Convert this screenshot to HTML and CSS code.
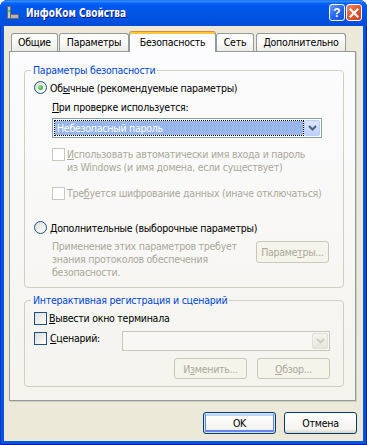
FILE: index.html
```html
<!DOCTYPE html>
<html lang="ru">
<head>
    <meta charset="UTF-8">
    <title>ИнфоКом Свойства</title>
    <link rel="stylesheet" href="styles.css">
</head>
<body>
    <div class="window">
        <div class="titlebar">
            <svg class="app-icon" width="16" height="16" viewBox="0 0 16 16">
                <rect x="2.5" y="1.5" width="3" height="12" fill="#c8c8c8" stroke="#6a6a6a"/>
                <rect x="5.5" y="9.5" width="8" height="4" fill="#b4b4b4" stroke="#6a6a6a"/>
                <rect x="3" y="5" width="2" height="2" fill="#3fd24a"/>
            </svg>
            <span class="title">ИнфоКом Свойства</span>
            <div class="caption-buttons">
                <span class="cap-btn cap-help">?</span>
                <span class="cap-btn cap-close">
                    <svg width="10" height="10" viewBox="0 0 10 10">
                        <path d="M1.5 1.5 L8.5 8.5 M8.5 1.5 L1.5 8.5" stroke="#fff" stroke-width="2.2" stroke-linecap="square"/>
                    </svg>
                </span>
            </div>
        </div>

        <div class="client">
            <div class="tabs">
                <div class="tab tab-general">Общие</div>
                <div class="tab tab-params">Параметры</div>
                <div class="tab tab-security selected">Безопасность</div>
                <div class="tab tab-net">Сеть</div>
                <div class="tab tab-extra">Дополнительно</div>
            </div>

            <div class="panel">
                <fieldset class="group">
                    <legend>Параметры безопасности</legend>
                    <div class="option first">
                        <span class="radio checked"></span>
                        <span>Об<u>ы</u>чные (рекомендуемые параметры)</span>
                    </div>
                    <div class="indent label-line"><u>П</u>ри проверке используется:</div>
                    <div class="combo combo-auth indent">
                        <span class="combo-value">Небезопасный пароль</span>
                        <span class="combo-btn">
                            <svg width="9" height="6" viewBox="0 0 9 6"><path d="M1 1 L4.5 4.5 L8 1" fill="none" stroke="#4d6185" stroke-width="2"/></svg>
                        </span>
                    </div>
                    <div class="check-row indent disabled auto-login">
                        <span class="check"></span>
                        <span><u>И</u>спользовать автоматически имя входа и пароль<br>из Windows (и имя домена, если существует)</span>
                    </div>
                    <div class="check-row indent disabled encrypt">
                        <span class="check"></span>
                        <span>Тре<u>б</u>уется шифрование данных (иначе отключаться)</span>
                    </div>
                    <div class="option custom">
                        <span class="radio"></span>
                        <span><u>Д</u>ополнительные (выборочные параметры)</span>
                    </div>
                    <div class="custom-row indent">
                        <div class="hint">Применение этих параметров требует<br>знания протоколов обеспечения<br>безопасности.</div>
                        <span class="btn disabled">Параме<u>т</u>ры...</span>
                    </div>
                </fieldset>

                <fieldset class="group group-script">
                    <legend>Интерактивная регистрация и сценарий</legend>
                    <div class="check-row terminal">
                        <span class="check enabled"></span>
                        <span><u>В</u>ывести окно терминала</span>
                    </div>
                    <div class="script-row">
                        <span class="check enabled"></span>
                        <span class="script-label"><u>С</u>ценарий:</span>
                        <div class="combo combo-script">
                            <span class="combo-value"></span>
                            <span class="combo-btn">
                                <svg width="9" height="6" viewBox="0 0 9 6"><path d="M1 1 L4.5 4.5 L8 1" fill="none" stroke="#cfcdc2" stroke-width="2"/></svg>
                            </span>
                        </div>
                    </div>
                    <div class="button-row">
                        <span class="btn disabled">И<u>з</u>менить...</span>
                        <span class="btn disabled"><u>О</u>бзор...</span>
                    </div>
                </fieldset>
            </div>

            <div class="dialog-buttons">
                <span class="btn default">OK</span>
                <span class="btn">Отмена</span>
            </div>
        </div>
    </div>
</body>
</html>
```

FILE: styles.css
```css
* {
    box-sizing: border-box;
}
body {
    margin: 0;
    background: #fff;
    font-family: "DejaVu Sans Condensed", "Liberation Sans", sans-serif;
    font-size: 10.5px;
    letter-spacing: -0.25px;
    color: #000;
}
u {
    text-decoration: underline;
    text-underline-offset: 1px;
}
.window {
    width: 367px;
    height: 445px;
    display: flex;
    flex-direction: column;
    background: #0855dd;
    border-radius: 8px 8px 0 0;
    overflow: hidden;
    box-shadow: inset 1px 0 #0831d9, inset -1px 0 #001ea0, inset 0 -1px #001ea0;
}
.titlebar {
    height: 26px;
    display: flex;
    align-items: center;
    padding: 0 5px 0 5px;
    background: linear-gradient(#0a5fe8 0, #3d95ff 1px, #0a66f7 3px, #0058ee 6px, #0055e5 50%, #0050dd 85%, #004bd6 100%);
}
.app-icon {
    flex: none;
    margin-top: -1px;
}
.title {
    margin-left: 5px;
    color: #fff;
    font-family: "DejaVu Sans Condensed", sans-serif;
    font-weight: bold;
    font-size: 13px;
    letter-spacing: 0;
    text-shadow: 1px 1px #0f1089;
    flex: 1;
    margin-top: -1px;
    white-space: nowrap;
    transform: scaleX(0.77);
    transform-origin: left center;
}
.caption-buttons {
    display: flex;
    gap: 1px;
    align-self: flex-start;
    margin-top: 4px;
}
.cap-btn {
    width: 16px;
    height: 17px;
    border: 1px solid #fff;
    border-radius: 3px;
    display: flex;
    align-items: center;
    justify-content: center;
    color: #fff;
}
.cap-help {
    background: linear-gradient(135deg, #6c9bff, #2463ea 55%, #1a52dc);
    font-family: "Liberation Sans", Arial, sans-serif;
    font-weight: bold;
    font-size: 12px;
    letter-spacing: 0;
}
.cap-close {
    background: linear-gradient(135deg, #f08a6c, #e2552e 50%, #c8401c);
}
.client {
    flex: 1;
    margin: 0 4px 4px;
    background: #ece9d8;
    display: flex;
    flex-direction: column;
}
.tabs {
    display: flex;
    align-items: flex-end;
    height: 21px;
    margin-top: 5px;
    padding-left: 7px;
}
.tab {
    height: 18px;
    margin-bottom: 1px;
    border: 1px solid #919b9c;
    border-bottom: none;
    border-radius: 3px 3px 0 0;
    background: linear-gradient(#fff, #fafaf8 50%, #ecebe6);
    text-align: center;
    line-height: 17px;
    white-space: nowrap;
}
.tab-general { width: 47px; }
.tab-params { width: 70px; margin-left: 1px; }
.tab-security { width: 87px; }
.tab-net { width: 38px; }
.tab-extra { width: 90px; margin-left: 2px; }
.tab.selected {
    position: relative;
    z-index: 1;
    height: 21px;
    margin-bottom: 0;
    border-top-color: #e68b2c;
    background: #fcfcfe;
    box-shadow: inset 0 2px #ffc73c;
    line-height: 18px;
    padding-top: 1px;
}
.panel {
    width: 347px;
    margin: -1px 0 0 5px;
    padding: 12px 11px 13px 14px;
    border: 1px solid #919b9c;
    background: linear-gradient(#fcfcfe, #f4f3ee);
    box-shadow: 1px 1px 0 #d0cec2;
}
.group {
    min-width: 0;
    margin: 0;
    padding: 0 13px 8px 9px;
    border: 1px solid #d0d0bf;
    border-radius: 4px;
}
.group legend {
    margin-left: -3px;
    padding: 0 2px;
    color: #0046d5;
    line-height: 13px;
}
.group-script {
    margin-top: 6px;
    padding-bottom: 7px;
}
.indent {
    margin-left: 18px;
}
.option {
    display: flex;
    align-items: center;
    gap: 3px;
    height: 13px;
    white-space: nowrap;
}
.option.first {
    margin-top: 4px;
}
.option.custom {
    margin-top: 21px;
}
.radio {
    width: 13px;
    height: 13px;
    flex: none;
    border: 1px solid #1c5180;
    border-radius: 50%;
    background: linear-gradient(135deg, #dcdcd7, #fff);
    display: flex;
    align-items: center;
    justify-content: center;
}
.radio.checked::after {
    content: "";
    width: 5px;
    height: 5px;
    border-radius: 50%;
    background: radial-gradient(circle at 35% 35%, #8ee68e, #21a121);
}
.label-line {
    margin-top: 7px;
    line-height: 13px;
}
.combo {
    display: flex;
    height: 20px;
    border: 1px solid #7f9db9;
    background: #fff;
    padding: 1px;
}
.combo-auth {
    width: 270px;
    margin-top: 4px;
}
.combo-value {
    flex: 1;
    padding-left: 2px;
    line-height: 14px;
    white-space: nowrap;
}
.combo-auth .combo-value {
    margin: 1px;
    background: #98b6e9;
    color: #fff;
    outline: 1px dotted #000;
}
.combo-btn {
    width: 16px;
    flex: none;
    border: 1px solid #b9cdf6;
    border-radius: 2px;
    background: linear-gradient(#dce6fd, #bfd0fa);
    display: flex;
    align-items: center;
    justify-content: center;
}
.combo-script {
    width: 208px;
    border-color: #c9c7ba;
    background: #f8f7f3;
}
.combo-script .combo-btn {
    border-color: #e2e0d6;
    background: linear-gradient(#f4f3ee, #e8e6dc);
}
.check-row {
    display: flex;
    align-items: flex-start;
    gap: 2px;
    line-height: 13px;
    white-space: nowrap;
}
.auto-login {
    margin-top: 10px;
}
.encrypt {
    margin-top: 13px;
}
.check {
    width: 13px;
    height: 13px;
    flex: none;
    border: 1px solid #cac8bb;
    background: #fff;
}
.check.enabled {
    border-color: #1c5180;
    background: linear-gradient(135deg, #dcdcd7, #fff);
}
.disabled {
    color: #aca899;
}
.custom-row {
    display: flex;
    margin-top: 6px;
}
.hint {
    width: 204px;
    line-height: 13px;
    color: #aca899;
    white-space: nowrap;
}
.custom-row .btn {
    margin-top: 1px;
}
.btn {
    width: 73px;
    height: 22px;
    display: flex;
    align-items: center;
    justify-content: center;
    border: 1px solid #003c74;
    border-radius: 3px;
    background: linear-gradient(#fff, #f4f4f0 80%, #d8d2c6);
    white-space: nowrap;
}
.btn.disabled {
    border-color: #c9c7ba;
    background: #f5f4ea;
    color: #aca899;
}
.btn.default {
    box-shadow: inset 0 0 0 1px #cee7ff, inset 0 -1px 0 2px #6982ee, inset 0 1px 0 2px #bcd4f6;
}
.group-script .check-row.terminal {
    margin-top: 5px;
}
.script-row {
    display: flex;
    align-items: flex-start;
    margin-top: 6px;
    line-height: 13px;
}
.script-row .check {
    margin-top: 1px;
}
.script-label {
    flex: 1;
    margin-left: 3px;
    margin-top: 1px;
}
.button-row {
    display: flex;
    justify-content: flex-end;
    gap: 10px;
    margin-top: 7px;
}
.button-row .btn {
    height: 21px;
}
.dialog-buttons {
    display: flex;
    justify-content: flex-end;
    gap: 8px;
    margin-top: 11px;
    padding-right: 6px;
}
```
